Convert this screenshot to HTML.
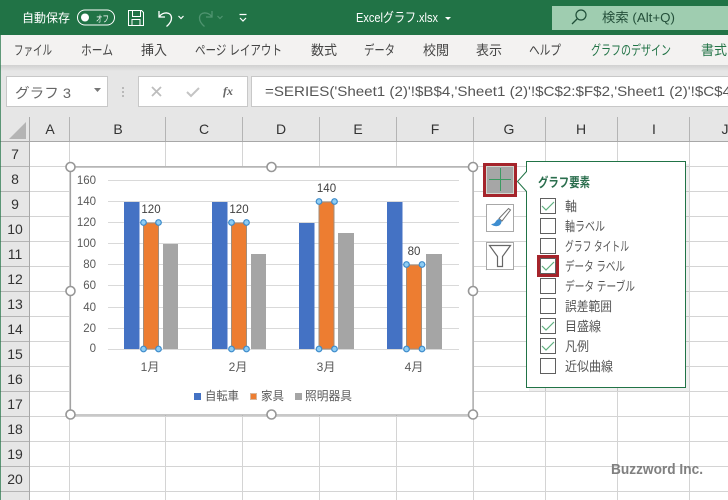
<!DOCTYPE html>
<html><head><meta charset="utf-8"><style>
html,body{margin:0;padding:0;width:728px;height:500px;overflow:hidden;background:#fff}
svg{display:block}
text{font-family:"Liberation Sans","Noto Sans CJK JP",sans-serif}
.t{font-size:13.5px;fill:#444}
.c{font-size:14px;fill:#333;text-anchor:middle}
.a{font-size:11.5px;fill:#595959;text-anchor:end}
.x{font-size:12px;fill:#595959;text-anchor:middle}
.l{font-size:13px;fill:#555}
</style></head><body>
<svg width="728" height="500" viewBox="0 0 728 500" xmlns="http://www.w3.org/2000/svg">
<defs>
<linearGradient id="sh" x1="0" y1="0" x2="0" y2="1"><stop offset="0" stop-color="#d0d0d0"/><stop offset="1" stop-color="#e6e6e6"/></linearGradient>
</defs>
<rect width="728" height="500" fill="#fff"/>
<!-- title bar -->
<rect width="728" height="35" fill="#217346"/>
<text x="22" y="22" font-size="12" fill="#fff" textLength="48" lengthAdjust="spacingAndGlyphs">自動保存</text>
<rect x="77.500" y="10" width="37" height="15" rx="7.500" fill="none" stroke="#fff" stroke-width="1"/>
<circle cx="85" cy="17.500" r="4" fill="#fff"/>
<text x="96" y="22" font-size="9" fill="#fff" textLength="13" lengthAdjust="spacingAndGlyphs">オフ</text>
<path d="M128.500 10.500h13l2 2v13h-15zM132.500 10.500v6h8v-6M132 25.500v-6h8v6" fill="none" stroke="#fff" stroke-width="1"/>
<path d="M159 11v6h6M159.500 16.500c3-5 12-5 12 1.500 0 3-2 6-5 8.500" fill="none" stroke="#fff" stroke-width="1.300"/>
<path d="M178.500 16l2.500 2.500 2.500-2.500" fill="none" stroke="#fff" stroke-width="1.200"/>
<path d="M212 11v6h-6M211.500 16.500c-3-5-12-5-12 1.500 0 3 2 6 5 8.500" fill="none" stroke="#4f9470" stroke-width="1.300"/>
<path d="M217.500 16l2.500 2.500 2.500-2.500" fill="none" stroke="#4f9470" stroke-width="1.200"/>
<path d="M239.500 14.500h7M240 18l3 3 3-3" fill="none" stroke="#fff" stroke-width="1.200"/>
<text x="356" y="22" font-size="13" fill="#fff" textLength="82" lengthAdjust="spacingAndGlyphs">Excelグラフ.xlsx</text>
<path d="M445 17h6l-3 3z" fill="#fff"/>
<rect x="552" y="6" width="176" height="24" fill="#9fcdb0"/>
<circle cx="581" cy="15" r="5" fill="none" stroke="#1f4e38" stroke-width="1.200"/>
<path d="M577 19l-5 5" stroke="#1f4e38" stroke-width="1.300"/>
<text x="602" y="22" font-size="13" fill="#244f3a" textLength="73" lengthAdjust="spacingAndGlyphs">検索 (Alt+Q)</text>
<!-- ribbon tabs -->
<rect y="35" width="728" height="30" fill="#f3f2f1"/>
<text class="t" x="14" y="55" textLength="38" lengthAdjust="spacingAndGlyphs">ファイル</text>
<text class="t" x="81" y="55" textLength="32" lengthAdjust="spacingAndGlyphs">ホーム</text>
<text class="t" x="141" y="55" textLength="26" lengthAdjust="spacingAndGlyphs">挿入</text>
<text class="t" x="195" y="55" textLength="87" lengthAdjust="spacingAndGlyphs">ページ レイアウト</text>
<text class="t" x="311" y="55" textLength="26" lengthAdjust="spacingAndGlyphs">数式</text>
<text class="t" x="364" y="55" textLength="31" lengthAdjust="spacingAndGlyphs">データ</text>
<text class="t" x="423" y="55" textLength="26" lengthAdjust="spacingAndGlyphs">校閲</text>
<text class="t" x="476" y="55" textLength="26" lengthAdjust="spacingAndGlyphs">表示</text>
<text class="t" x="529" y="55" textLength="32" lengthAdjust="spacingAndGlyphs">ヘルプ</text>
<text x="591" y="55" font-size="13.500" fill="#217346" textLength="80" lengthAdjust="spacingAndGlyphs">グラフのデザイン</text>
<text x="701" y="55" font-size="13.500" fill="#217346" textLength="26" lengthAdjust="spacingAndGlyphs">書式</text>
<!-- formula bar -->
<rect y="65" width="728" height="76" fill="#e6e6e6"/>
<rect y="65" width="728" height="6" fill="url(#sh)"/>
<rect x="6.500" y="76.500" width="101" height="30" fill="#fff" stroke="#c8c8c8"/>
<text x="15" y="98" font-size="14" fill="#666" textLength="56" lengthAdjust="spacingAndGlyphs">グラフ 3</text>
<path d="M94 88h7l-3.500 4z" fill="#777"/>
<path d="M123 87v2M123 91v2M123 95v2" stroke="#aaa" stroke-width="1.500"/>
<rect x="138.500" y="76.500" width="109" height="30" fill="#fff" stroke="#c8c8c8"/>
<path d="M152 87l9 9M161 87l-9 9" stroke="#bdbdbd" stroke-width="1.800"/>
<path d="M187 92l4 4 8-8" fill="none" stroke="#c4c4c4" stroke-width="2"/>
<text x="223" y="95" font-size="12" font-style="italic" font-weight="bold" fill="#666" style="font-family:'Liberation Serif',serif">fx</text>
<rect x="251.500" y="76.500" width="480" height="30" fill="#fff" stroke="#c8c8c8"/>
<text x="265" y="96" font-size="14" fill="#555" textLength="466" lengthAdjust="spacingAndGlyphs">=SERIES('Sheet1 (2)'!$B$4,'Sheet1 (2)'!$C$2:$F$2,'Sheet1 (2)'!$C$4</text>
<!-- headers -->
<rect y="117" width="728" height="24" fill="#e6e6e6"/>
<rect y="141" width="30" height="359" fill="#e6e6e6"/>
<path d="M9 139h17v-17z" fill="#b4b4b4"/>
<path d="M0 141.500h728M29.500 117v383" stroke="#a8a8a8" fill="none"/>
<g stroke="#b4b4b4">
<path d="M69.500 117v24M165.500 117v24M242.500 117v24M319.500 117v24M396.500 117v24M473.500 117v24M545.500 117v24M617.500 117v24M689.500 117v24"/>
<path d="M0 166.500h29M0 191.500h29M0 216.500h29M0 241.500h29M0 266.500h29M0 291.500h29M0 316.500h29M0 341.500h29M0 366.500h29M0 391.500h29M0 416.500h29M0 441.500h29M0 466.500h29M0 491.500h29"/>
</g>
<!-- grid -->
<g stroke="#d4d4d4">
<path d="M69.500 142v358M165.500 142v358M242.500 142v358M319.500 142v358M396.500 142v358M473.500 142v358M545.500 142v358M617.500 142v358M689.500 142v358"/>
<path d="M30 166.500h698M30 191.500h698M30 216.500h698M30 241.500h698M30 266.500h698M30 291.500h698M30 316.500h698M30 341.500h698M30 366.500h698M30 391.500h698M30 416.500h698M30 441.500h698M30 466.500h698M30 491.500h698"/>
</g>
<rect x="0" y="35" width="1" height="465" fill="#217346" opacity=".7"/>
<text class="c" x="50" y="134">A</text><text class="c" x="118" y="134">B</text><text class="c" x="204" y="134">C</text><text class="c" x="281" y="134">D</text><text class="c" x="358" y="134">E</text><text class="c" x="435" y="134">F</text><text class="c" x="509" y="134">G</text><text class="c" x="581" y="134">H</text><text class="c" x="654" y="134">I</text><text class="c" x="725" y="134">J</text>
<text class="c" x="15" y="159">7</text><text class="c" x="15" y="184">8</text><text class="c" x="15" y="209">9</text><text class="c" x="15" y="234">10</text><text class="c" x="15" y="259">11</text><text class="c" x="15" y="284">12</text><text class="c" x="15" y="309">13</text><text class="c" x="15" y="334">14</text><text class="c" x="15" y="359">15</text><text class="c" x="15" y="384">16</text><text class="c" x="15" y="409">17</text><text class="c" x="15" y="434">18</text><text class="c" x="15" y="459">19</text><text class="c" x="15" y="484">20</text>
<!-- chart -->
<rect x="70.500" y="167" width="402.500" height="248" fill="#fff" stroke="#a3a3a3" stroke-width="1.200"/>
<path d="M108 180.500h351M108 201.500h351M108 222.500h351M108 243.500h351M108 264.500h351M108 285.500h351M108 307.500h351M108 328.500h351M108 349.500h351" stroke="#d9d9d9"/>
<text class="a" x="96" y="184">160</text><text class="a" x="96" y="205">140</text><text class="a" x="96" y="226">120</text><text class="a" x="96" y="247">100</text><text class="a" x="96" y="268">80</text><text class="a" x="96" y="289">60</text><text class="a" x="96" y="311">40</text><text class="a" x="96" y="332">20</text><text class="a" x="96" y="352">0</text>
<g fill="#4472c4">
<rect x="124" y="202" width="15.500" height="147"/><rect x="212" y="202" width="15.500" height="147"/><rect x="299" y="223" width="15.500" height="126"/><rect x="387" y="202" width="15.500" height="147"/>
</g>
<g fill="#ed7d31" stroke="#a38d7a" stroke-width="1">
<rect x="143.500" y="223" width="15" height="126"/><rect x="231.500" y="223" width="15" height="126"/><rect x="319" y="202" width="15" height="147"/><rect x="406.500" y="265" width="15" height="84"/>
</g>
<g fill="#a5a5a5">
<rect x="163" y="244" width="15" height="105"/><rect x="251" y="254" width="15" height="95"/><rect x="338" y="233" width="16" height="116"/><rect x="426" y="254" width="16" height="95"/>
</g>
<g fill="#8ecdf4" stroke="#3f8ccb" stroke-width="1.200">
<circle cx="143.500" cy="222.500" r="2.800"/><circle cx="158.500" cy="222.500" r="2.800"/><circle cx="143.500" cy="349" r="2.800"/><circle cx="158.500" cy="349" r="2.800"/>
<circle cx="231.500" cy="222.500" r="2.800"/><circle cx="246.500" cy="222.500" r="2.800"/><circle cx="231.500" cy="349" r="2.800"/><circle cx="246.500" cy="349" r="2.800"/>
<circle cx="319" cy="201.500" r="2.800"/><circle cx="334.500" cy="201.500" r="2.800"/><circle cx="319" cy="349" r="2.800"/><circle cx="334.500" cy="349" r="2.800"/>
<circle cx="406.500" cy="264.500" r="2.800"/><circle cx="422" cy="264.500" r="2.800"/><circle cx="406.500" cy="349" r="2.800"/><circle cx="422" cy="349" r="2.800"/>
</g>
<g font-size="11.500" fill="#404040" text-anchor="middle">
<text x="151" y="213">120</text><text x="239" y="213">120</text><text x="326.500" y="192">140</text><text x="414" y="255">80</text>
</g>
<text class="x" x="150" y="371">1月</text><text class="x" x="238" y="371">2月</text><text class="x" x="326" y="371">3月</text><text class="x" x="414" y="371">4月</text>
<rect x="194" y="393" width="7" height="7" fill="#4472c4"/>
<text x="205" y="400" font-size="12" fill="#595959" textLength="34" lengthAdjust="spacingAndGlyphs">自転車</text>
<rect x="250.500" y="393.500" width="6" height="6" fill="#ed7d31" stroke="#d8b79c"/>
<text x="261" y="400" font-size="12" fill="#595959" textLength="23" lengthAdjust="spacingAndGlyphs">家具</text>
<rect x="295" y="393" width="7" height="7" fill="#a5a5a5"/>
<text x="305" y="400" font-size="12" fill="#595959" textLength="47" lengthAdjust="spacingAndGlyphs">照明器具</text>
<g fill="#fff" stroke="#979797" stroke-width="1.600">
<circle cx="70.500" cy="167" r="4.500"/><circle cx="271.500" cy="167" r="4.500"/><circle cx="473" cy="167" r="4.500"/>
<circle cx="70.500" cy="291" r="4.500"/><circle cx="473" cy="291" r="4.500"/>
<circle cx="70.500" cy="414.500" r="4.500"/><circle cx="271.500" cy="414.500" r="4.500"/><circle cx="473" cy="414.500" r="4.500"/>
</g>
<!-- side buttons -->
<rect x="484.500" y="164.500" width="31" height="31" fill="#a6a6a6" stroke="#a5242b" stroke-width="3"/>
<rect x="486.500" y="166.500" width="27" height="27" fill="none" stroke="#d0d8d0" stroke-width="1"/>
<path d="M489 179.500h22M500.500 168v23" stroke="#3c9a62" stroke-width="1"/>
<rect x="486.500" y="204.500" width="27" height="27" fill="#fff" stroke="#a8a8a8"/>
<path d="M508.500 208.500l2 1.500-8.500 11-3-2.500z" fill="#fff" stroke="#707070"/>
<path d="M499 219c-3 .5-3 3-4.500 4-1 .7-2.500 1-3.500 1 2 2.500 8 3.500 10-.5.600-1.200.500-2 .500-2.500z" fill="#3e8ed0"/>
<rect x="486.500" y="242.500" width="27" height="27" fill="#fff" stroke="#a8a8a8"/>
<path d="M489.500 245.500h21l-8 11v10h-5v-10z" fill="#fff" stroke="#666" stroke-width="1.200"/>
<!-- panel -->
<rect x="529" y="164" width="160" height="227" fill="#000" opacity=".06"/>
<path d="M526.500 161.500h159v226h-159v-196l-9-10 9-10z" fill="#fff" stroke="#217346" stroke-width="1"/>
<text x="538" y="187" font-size="13" font-weight="bold" fill="#2a6e4d" textLength="52" lengthAdjust="spacingAndGlyphs">グラフ要素</text>
<g fill="#fff" stroke="#5f5f5f" stroke-width="1">
<rect x="540.500" y="198.500" width="15" height="15"/><rect x="540.500" y="218.500" width="15" height="15"/><rect x="540.500" y="238.500" width="15" height="15"/><rect x="540.500" y="258.500" width="15" height="15"/><rect x="540.500" y="278.500" width="15" height="15"/><rect x="540.500" y="298.500" width="15" height="15"/><rect x="540.500" y="318.500" width="15" height="15"/><rect x="540.500" y="338.500" width="15" height="15"/><rect x="540.500" y="358.500" width="15" height="15"/>
</g>
<path d="M542 206l4 4 8-8M542 266l4 4 8-8M542 326l4 4 8-8M542 346l4 4 8-8" fill="none" stroke="#5fb07f" stroke-width="1.200"/>
<rect x="538.500" y="256.500" width="19" height="19" fill="none" stroke="#a5242b" stroke-width="3"/>
<text class="l" x="565" y="211" textLength="12" lengthAdjust="spacingAndGlyphs">軸</text>
<text class="l" x="565" y="231" textLength="40" lengthAdjust="spacingAndGlyphs">軸ラベル</text>
<text class="l" x="565" y="251" textLength="64" lengthAdjust="spacingAndGlyphs">グラフ タイトル</text>
<text class="l" x="565" y="271" textLength="60" lengthAdjust="spacingAndGlyphs">データ ラベル</text>
<text class="l" x="565" y="291" textLength="70" lengthAdjust="spacingAndGlyphs">データ テーブル</text>
<text class="l" x="565" y="311" textLength="47" lengthAdjust="spacingAndGlyphs">誤差範囲</text>
<text class="l" x="565" y="331" textLength="36" lengthAdjust="spacingAndGlyphs">目盛線</text>
<text class="l" x="565" y="351" textLength="24" lengthAdjust="spacingAndGlyphs">凡例</text>
<text class="l" x="565" y="371" textLength="48" lengthAdjust="spacingAndGlyphs">近似曲線</text>
<text x="611" y="474" font-size="15" font-weight="bold" fill="#808080" textLength="92" lengthAdjust="spacingAndGlyphs">Buzzword Inc.</text>
</svg>
</body></html>
